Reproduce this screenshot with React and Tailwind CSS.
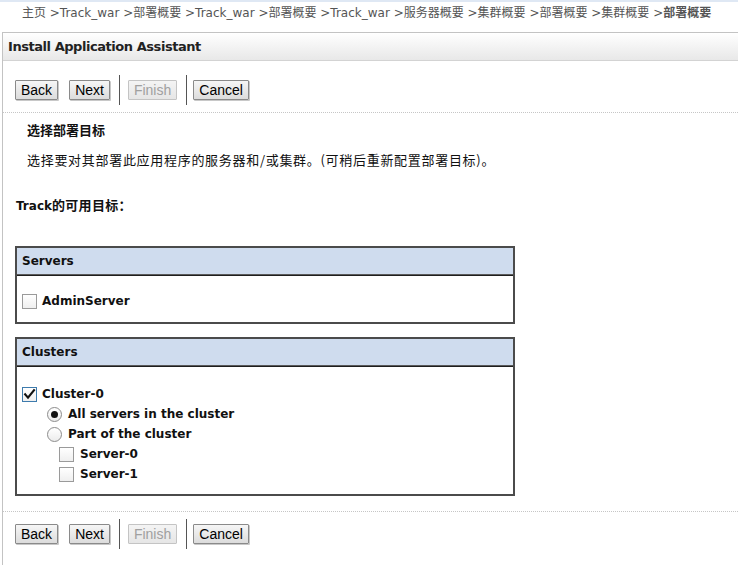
import React from "react";

const CJK = '"DejaVu Sans", "Noto Sans CJK SC", sans-serif';
const CJK_FIRST = '"Noto Sans CJK SC", "DejaVu Sans", sans-serif';

function Btn({ children, disabled }) {
  return (
    <div
      className={
        "h-[20px] px-[5px] flex items-center text-[14px] border rounded-[1px] bg-gradient-to-b " +
        (disabled
          ? "border-[#c4c4c4] from-[#f4f4f4] to-[#e6e6e6] text-[#a0a0a0]"
          : "border-[#8a8a8a] from-[#f6f6f6] to-[#dcdcdc] text-black shadow-[1px_1px_0_#c8c8c8]")
      }
      style={{ fontFamily: '"Liberation Sans", Arial, sans-serif' }}
    >
      {children}
    </div>
  );
}

function Sep() {
  return <div className="w-px h-[30px] bg-[#555]" />;
}

function ButtonRow() {
  return (
    <div className="h-[30px] flex items-center pl-[12px]">
      <Btn>Back</Btn>
      <div className="w-[11px]" />
      <Btn>Next</Btn>
      <div className="w-[9px]" />
      <Sep />
      <div className="w-[8px]" />
      <Btn disabled>Finish</Btn>
      <div className="w-[9px]" />
      <Sep />
      <div className="w-[6px]" />
      <Btn>Cancel</Btn>
    </div>
  );
}

function Check({ checked }) {
  return (
    <div
      className={
        "w-[15px] h-[15px] border bg-gradient-to-b from-white to-[#efefef] relative shrink-0 " +
        (checked ? "border-[#3d7bad]" : "border-[#9a9a9a]")
      }
    >
      {checked && (
        <svg viewBox="0 0 15 15" className="absolute -left-px -top-px w-[15px] h-[15px]">
          <path d="M3.2 7.4 L6 10.6 L12 3.2" fill="none" stroke="#111" strokeWidth="2.2" strokeLinecap="square" />
        </svg>
      )}
    </div>
  );
}

function Radio({ on }) {
  return (
    <div className="w-[15px] h-[15px] rounded-full border border-[#8c8c8c] bg-gradient-to-b from-white to-[#ececec] flex items-center justify-center shrink-0">
      {on && <div className="w-[7px] h-[7px] rounded-full bg-[#111]" />}
    </div>
  );
}

function Table({ title, children, bodyClass }) {
  return (
    <div className="w-[500px] border-2 border-[#4b4b4b]">
      <div className="h-[27px] bg-[#cfdcee] flex items-center pl-[5px] text-[12px] font-bold text-[#111] border-b border-[#5a5a5a]">
        {title}
      </div>
      <div className="border-t border-[#1e1e1e]" />
      <div className={bodyClass}>{children}</div>
    </div>
  );
}

export default function App() {
  return (
    <div
      className="w-[738px] h-[565px] bg-white overflow-hidden text-[#111]"
      style={{ fontFamily: CJK }}
    >
      <div className="h-[32px] border-t-2 border-[#dfe8f4] pl-[22px] flex items-center text-[12px] text-[#555] whitespace-nowrap pb-[8px]">
        主页 &gt;Track_war &gt;部署概要 &gt;Track_war &gt;部署概要 &gt;Track_war &gt;服务器概要 &gt;集群概要 &gt;部署概要 &gt;集群概要 &gt;<span className="font-bold">部署概要</span>
      </div>
      <div className="ml-[2px] border-l border-t border-[#c3c3c3] h-[533px]">
        <div className="h-[28px] bg-gradient-to-b from-white to-[#e8e8e8] border-b border-[#d3d3d3] pl-[5px] flex items-center text-[13px] tracking-[-0.45px] font-bold text-[#222]">
          Install Application Assistant
        </div>
        <div className="h-[14px]" />
        <ButtonRow />
        <div className="mt-[7px] border-t border-dotted border-[#c6c6c6]" />
        <div className="pl-[24px] pt-[8px] text-[13px] font-bold leading-[18px]" style={{ fontFamily: CJK_FIRST }}>
          选择部署目标
        </div>
        <div className="pl-[24px] mt-[12px] text-[13px] leading-[18px] tracking-[0.7px] whitespace-nowrap" style={{ fontFamily: CJK_FIRST }}>
          选择要对其部署此应用程序的服务器和/或集群。(可稍后重新配置部署目标)。
        </div>
        <div className="pl-[13px] mt-[27px] text-[12px] font-bold leading-[18px]">
          Track<span className="text-[13px] tracking-[0.3px]" style={{ fontFamily: CJK_FIRST }}>的可用目标：</span>
        </div>
        <div className="pl-[12px] mt-[31px]">
          <Table title="Servers" bodyClass="h-[46px] flex items-center pl-[5px] pt-[4px]">
            <div className="flex items-center gap-[5px] text-[12px] font-bold">
              <Check />
              <span>AdminServer</span>
            </div>
          </Table>
        </div>
        <div className="pl-[12px] mt-[13px]">
          <Table title="Clusters" bodyClass="h-[127px] pl-[5px] pt-[17px] text-[12px] font-bold">
            <div className="h-[20px] flex items-center gap-[5px]">
              <Check checked />
              <span>Cluster-0</span>
            </div>
            <div className="h-[20px] flex items-center gap-[6px] pl-[25px]">
              <Radio on />
              <span>All servers in the cluster</span>
            </div>
            <div className="h-[20px] flex items-center gap-[6px] pl-[25px]">
              <Radio />
              <span>Part of the cluster</span>
            </div>
            <div className="h-[20px] flex items-center gap-[6px] pl-[37px]">
              <Check />
              <span>Server-0</span>
            </div>
            <div className="h-[20px] flex items-center gap-[6px] pl-[37px]">
              <Check />
              <span>Server-1</span>
            </div>
          </Table>
        </div>
        <div className="mt-[15px] border-t border-dotted border-[#c6c6c6]" />
        <div className="h-[7px]" />
        <ButtonRow />
      </div>
    </div>
  );
}
